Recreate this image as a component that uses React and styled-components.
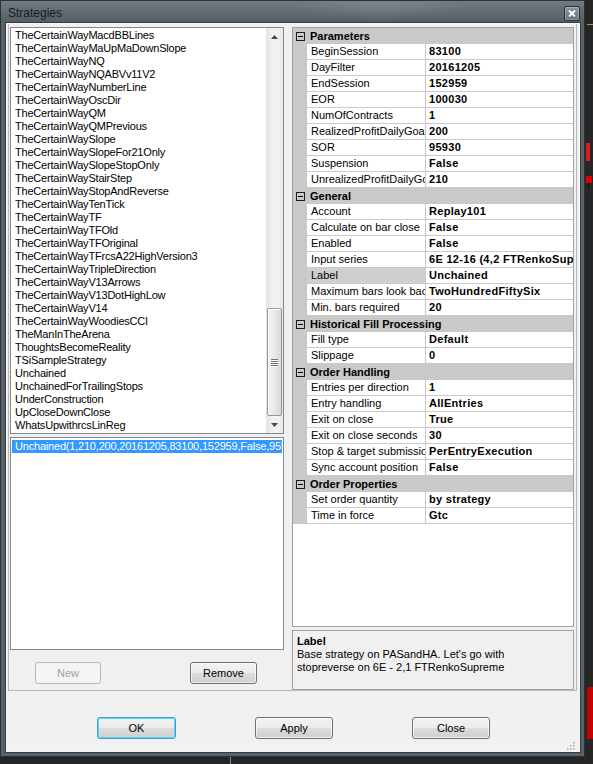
import React from 'react';
import styled, { createGlobalStyle } from 'styled-components';

const GlobalStyle = createGlobalStyle`
  html, body {
    margin: 0;
    padding: 0;
    background: #262626;
  }
  * {
    box-sizing: border-box;
  }
`;

const Screen = styled.div`
  position: relative;
  width: 593px;
  height: 764px;
  overflow: hidden;
  background: #262626;
  font-family: "Liberation Sans", Arial, sans-serif;
  font-size: 11px;
  color: #000;
`;

const Window = styled.div`
  width: 585px;
  height: 757px;
  display: flex;
  flex-direction: column;
  border: 1px solid #2c3135;
  background: #58626a;
  padding: 0 4px 4px 5px;
`;

const TitleBar = styled.div`
  height: 22px;
  flex: none;
  display: flex;
  align-items: center;
  justify-content: space-between;
  margin: 0 -4px 0 -5px;
  padding: 0 4px 0 7px;
  background:
    radial-gradient(ellipse 120px 18px at 380px 6px, rgba(255,255,255,0.10), rgba(255,255,255,0) 70%),
    linear-gradient(to bottom, #737c82 0%, #646d73 45%, #545d64 100%);
`;

const Title = styled.span`
  font-size: 12px;
  color: #16191b;
  padding-top: 1px;
`;

const CloseBox = styled.div`
  width: 16px;
  height: 15px;
  margin-top: 2px;
  display: flex;
  align-items: center;
  justify-content: center;
  border: 1px solid #2a2f33;
  border-radius: 2px;
  background: linear-gradient(to bottom, #8c959b, #6b757b);
  box-shadow: inset 0 0 0 1px rgba(255,255,255,0.25);
`;

const Client = styled.div`
  flex: 1;
  display: flex;
  flex-direction: column;
  background: #f0f0f0;
  border: 1px solid #f6f6f6;
  box-shadow: 0 0 0 1px #363c41;
`;

const UpperPanel = styled.div`
  display: flex;
  gap: 8px;
  margin: 0 2px 0 1px;
  padding: 3px 2px 0 1px;
  border: 1px solid #b9b9b9;
  border-top: none;
  box-shadow: 0 1px 0 #ffffff;
`;

const LeftColumn = styled.div`
  width: 274px;
  flex: none;
  display: flex;
  flex-direction: column;
`;

const RightColumn = styled.div`
  flex: 1;
  min-width: 0;
  display: flex;
  flex-direction: column;
`;

const ListBox = styled.div`
  height: ${(p) => p.$h}px;
  flex: none;
  display: flex;
  background: #fff;
  border: 1px solid #828790;
  margin-bottom: ${(p) => p.$mb || 0}px;
`;

const Items = styled.div`
  flex: 1;
  min-width: 0;
  overflow: hidden;
  padding-top: ${(p) => p.$pt || 1}px;
`;

const Item = styled.div`
  height: 13px;
  line-height: 13px;
  padding-left: ${(p) => (p.$selected ? 3 : 4)}px;
  margin: 0 ${(p) => (p.$selected ? 1 : 0)}px;
  white-space: nowrap;
  overflow: hidden;
  letter-spacing: -0.2px;
  background: ${(p) => (p.$selected ? '#3399ff' : 'transparent')};
  color: ${(p) => (p.$selected ? '#fff' : '#000')};
  font-size: 11px;
`;

const ScrollBar = styled.div`
  width: 17px;
  flex: none;
  display: flex;
  flex-direction: column;
  background: linear-gradient(to right, #e3e3e3, #f1f1f1 40%, #f1f1f1 70%, #e8e8e8);
`;

const ArrowButton = styled.div`
  height: 17px;
  flex: none;
  display: flex;
  align-items: center;
  justify-content: center;
`;

const Track = styled.div`
  flex: 1;
  display: flex;
  flex-direction: column;
  justify-content: flex-end;
  padding: 0 1px;
`;

const Thumb = styled.div`
  height: 108px;
  border: 1px solid #979797;
  border-radius: 2px;
  background: linear-gradient(to right, #f3f3f3, #e8e8e8 50%, #d8d8d8);
  box-shadow: inset 1px 1px 0 #ffffff;
  display: flex;
  flex-direction: column;
  align-items: center;
  justify-content: center;
  gap: 1px;
`;

const Grip = styled.span`
  width: 7px;
  height: 1px;
  background: #6f6f6f;
  box-shadow: 0 1px 0 #ffffff;
`;

const ButtonRow = styled.div`
  height: 40px;
  flex: none;
  display: flex;
  gap: 89px;
  padding: 12px 0 0 25px;
`;

const Button = styled.button`
  width: ${(p) => p.$w}px;
  height: 22px;
  padding: 0;
  font-family: "Liberation Sans", Arial, sans-serif;
  font-size: 11px;
  color: ${(p) => (p.$disabled ? '#a3a3a3' : '#000')};
  border: 1px solid ${(p) => (p.$default ? '#3c9fd8' : p.$disabled ? '#b5b9bc' : '#707070')};
  border-radius: 3px;
  background: ${(p) =>
    p.$disabled
      ? '#f4f4f4'
      : 'linear-gradient(to bottom, #f2f2f2 0%, #ebebeb 50%, #dddddd 51%, #cfcfcf 100%)'};
  box-shadow: ${(p) =>
    p.$default ? 'inset 0 0 0 1px #62d0f6' : p.$disabled ? 'none' : 'inset 0 0 0 1px rgba(255,255,255,0.7)'};
`;

const Grid = styled.div`
  height: 600px;
  flex: none;
  margin-bottom: 3px;
  background: #fff;
  border: 1px solid #a0a0a0;
  overflow: hidden;
`;

const CategoryRow = styled.div`
  height: 16px;
  display: flex;
  align-items: center;
  background: #c9c9c9;
  font-weight: bold;
  white-space: nowrap;
`;

const Toggle = styled.span`
  width: 9px;
  height: 9px;
  margin: 0 5px 0 3px;
  flex: none;
  display: flex;
  align-items: center;
  justify-content: center;
  border: 1px solid #1d1d1d;
`;

const Minus = styled.span`
  width: 5px;
  height: 1px;
  background: #000;
`;

const PropRow = styled.div`
  height: 16px;
  display: flex;
`;

const Margin = styled.div`
  width: 14px;
  flex: none;
  background: #c9c9c9;
`;

const NameCell = styled.div`
  width: 119px;
  flex: none;
  padding-left: 4px;
  line-height: 15px;
  white-space: nowrap;
  overflow: hidden;
  border-right: 1px solid #c9c9c9;
  border-bottom: 1px solid #c9c9c9;
  background: ${(p) => (p.$selected ? '#cfcfcf' : '#fff')};
`;

const ValueCell = styled.div`
  flex: 1;
  min-width: 0;
  padding-left: 3px;
  line-height: 15px;
  font-weight: bold;
  letter-spacing: 0.3px;
  white-space: nowrap;
  overflow: hidden;
  border-bottom: 1px solid #c9c9c9;
`;

const Description = styled.div`
  height: 60px;
  flex: none;
  padding: 4px 4px 0 4px;
  border: 1px solid #a0a0a0;
  background: #f0f0f0;
  line-height: 13px;
`;

const DescTitle = styled.div`
  font-weight: bold;
`;

const LowerPanel = styled.div`
  position: relative;
  flex: 1;
  display: flex;
  gap: 79px;
  padding: 26px 0 0 90px;
  background: #f1f1f1;
`;

const ResizeGrip = styled.svg`
  position: absolute;
  right: 4px;
  bottom: 1px;
`;

const Backdrop = styled.div`
  position: absolute;
  left: ${(p) => p.$x}px;
  top: ${(p) => p.$y}px;
  width: ${(p) => p.$w}px;
  height: ${(p) => p.$h}px;
  background: ${(p) => p.$c};
`;

const strategies = [
  'TheCertainWayMacdBBLines',
  'TheCertainWayMaUpMaDownSlope',
  'TheCertainWayNQ',
  'TheCertainWayNQABVv11V2',
  'TheCertainWayNumberLine',
  'TheCertainWayOscDir',
  'TheCertainWayQM',
  'TheCertainWayQMPrevious',
  'TheCertainWaySlope',
  'TheCertainWaySlopeFor21Only',
  'TheCertainWaySlopeStopOnly',
  'TheCertainWayStairStep',
  'TheCertainWayStopAndReverse',
  'TheCertainWayTenTick',
  'TheCertainWayTF',
  'TheCertainWayTFOld',
  'TheCertainWayTFOriginal',
  'TheCertainWayTFrcsA22HighVersion3',
  'TheCertainWayTripleDirection',
  'TheCertainWayV13Arrows',
  'TheCertainWayV13DotHighLow',
  'TheCertainWayV14',
  'TheCertainWayWoodiesCCI',
  'TheManInTheArena',
  'ThoughtsBecomeReality',
  'TSiSampleStrategy',
  'Unchained',
  'UnchainedForTrailingStops',
  'UnderConstruction',
  'UpCloseDownClose',
  'WhatsUpwithrcsLinReg',
];

const groups = [
  {
    title: 'Parameters',
    rows: [
      ['BeginSession', '83100'],
      ['DayFilter', '20161205'],
      ['EndSession', '152959'],
      ['EOR', '100030'],
      ['NumOfContracts', '1'],
      ['RealizedProfitDailyGoal', '200'],
      ['SOR', '95930'],
      ['Suspension', 'False'],
      ['UnrealizedProfitDailyGoal', '210'],
    ],
  },
  {
    title: 'General',
    rows: [
      ['Account', 'Replay101'],
      ['Calculate on bar close', 'False'],
      ['Enabled', 'False'],
      ['Input series', '6E 12-16 (4,2 FTRenkoSupreme)'],
      ['Label', 'Unchained', true],
      ['Maximum bars look back', 'TwoHundredFiftySix'],
      ['Min. bars required', '20'],
    ],
  },
  {
    title: 'Historical Fill Processing',
    rows: [
      ['Fill type', 'Default'],
      ['Slippage', '0'],
    ],
  },
  {
    title: 'Order Handling',
    rows: [
      ['Entries per direction', '1'],
      ['Entry handling', 'AllEntries'],
      ['Exit on close', 'True'],
      ['Exit on close seconds', '30'],
      ['Stop & target submission', 'PerEntryExecution'],
      ['Sync account position', 'False'],
    ],
  },
  {
    title: 'Order Properties',
    rows: [
      ['Set order quantity', 'by strategy'],
      ['Time in force', 'Gtc'],
    ],
  },
];

const Arrow = ({ down }) => (
  <svg width="7" height="4" viewBox="0 0 7 4">
    <path d={down ? 'M0 0 H7 L3.5 4 Z' : 'M0 4 H7 L3.5 0 Z'} fill="#4a4a4a" />
  </svg>
);

const App = () => {
  return (
    <>
      <GlobalStyle />
      <Screen>
        <Window>
          <TitleBar>
            <Title>Strategies</Title>
            <CloseBox>
              <svg width="8" height="7" viewBox="0 0 8 7">
                <path d="M1 0.5 L7 6.5 M7 0.5 L1 6.5" stroke="#fff" strokeWidth="1.8" />
              </svg>
            </CloseBox>
          </TitleBar>
          <Client>
            <UpperPanel>
              <LeftColumn>
                <ListBox $h={407} $mb={3}>
                  <Items>
                    {strategies.map((name) => (
                      <Item key={name}>{name}</Item>
                    ))}
                  </Items>
                  <ScrollBar>
                    <ArrowButton>
                      <Arrow />
                    </ArrowButton>
                    <Track>
                      <Thumb>
                        <Grip />
                        <Grip />
                        <Grip />
                        <Grip />
                      </Thumb>
                    </Track>
                    <ArrowButton>
                      <Arrow down />
                    </ArrowButton>
                  </ScrollBar>
                </ListBox>
                <ListBox $h={213}>
                  <Items $pt={2}>
                    <Item $selected>Unchained(1,210,200,20161205,83100,152959,False,95930,100030)</Item>
                  </Items>
                </ListBox>
                <ButtonRow>
                  <Button $w={66} $disabled>New</Button>
                  <Button $w={67}>Remove</Button>
                </ButtonRow>
              </LeftColumn>
              <RightColumn>
                <Grid>
                  {groups.map((group) => (
                    <React.Fragment key={group.title}>
                      <CategoryRow>
                        <Toggle>
                          <Minus />
                        </Toggle>
                        {group.title}
                      </CategoryRow>
                      {group.rows.map(([name, value, selected]) => (
                        <PropRow key={name}>
                          <Margin />
                          <NameCell $selected={selected}>{name}</NameCell>
                          <ValueCell>{value}</ValueCell>
                        </PropRow>
                      ))}
                    </React.Fragment>
                  ))}
                </Grid>
                <Description>
                  <DescTitle>Label</DescTitle>
                  <div>Base strategy on PASandHA. Let's go with</div>
                  <div>stopreverse on 6E - 2,1 FTRenkoSupreme</div>
                </Description>
              </RightColumn>
            </UpperPanel>
            <LowerPanel>
              <Button $w={79} $default>OK</Button>
              <Button $w={78}>Apply</Button>
              <Button $w={78}>Close</Button>
              <ResizeGrip width="8" height="8" viewBox="0 0 8 8">
                <g fill="#a8a8a8">
                  <rect x="6" y="0" width="1.5" height="1.5" />
                  <rect x="3" y="3" width="1.5" height="1.5" />
                  <rect x="6" y="3" width="1.5" height="1.5" />
                  <rect x="0" y="6" width="1.5" height="1.5" />
                  <rect x="3" y="6" width="1.5" height="1.5" />
                  <rect x="6" y="6" width="1.5" height="1.5" />
                </g>
              </ResizeGrip>
            </LowerPanel>
          </Client>
        </Window>
        <Backdrop $x={587} $y={24} $w={6} $h={1} $c="#c98a3a" />
        <Backdrop $x={586} $y={143} $w={4} $h={18} $c="#d42020" />
        <Backdrop $x={586} $y={176} $w={6} $h={7} $c="#e00000" />
        <Backdrop $x={588} $y={183} $w={1} $h={6} $c="#111" />
        <Backdrop $x={587} $y={687} $w={6} $h={52} $c="#c40000" />
        <Backdrop $x={230} $y={757} $w={1} $h={7} $c="#8a8a8a" />
      </Screen>
    </>
  );
};

export default App;
